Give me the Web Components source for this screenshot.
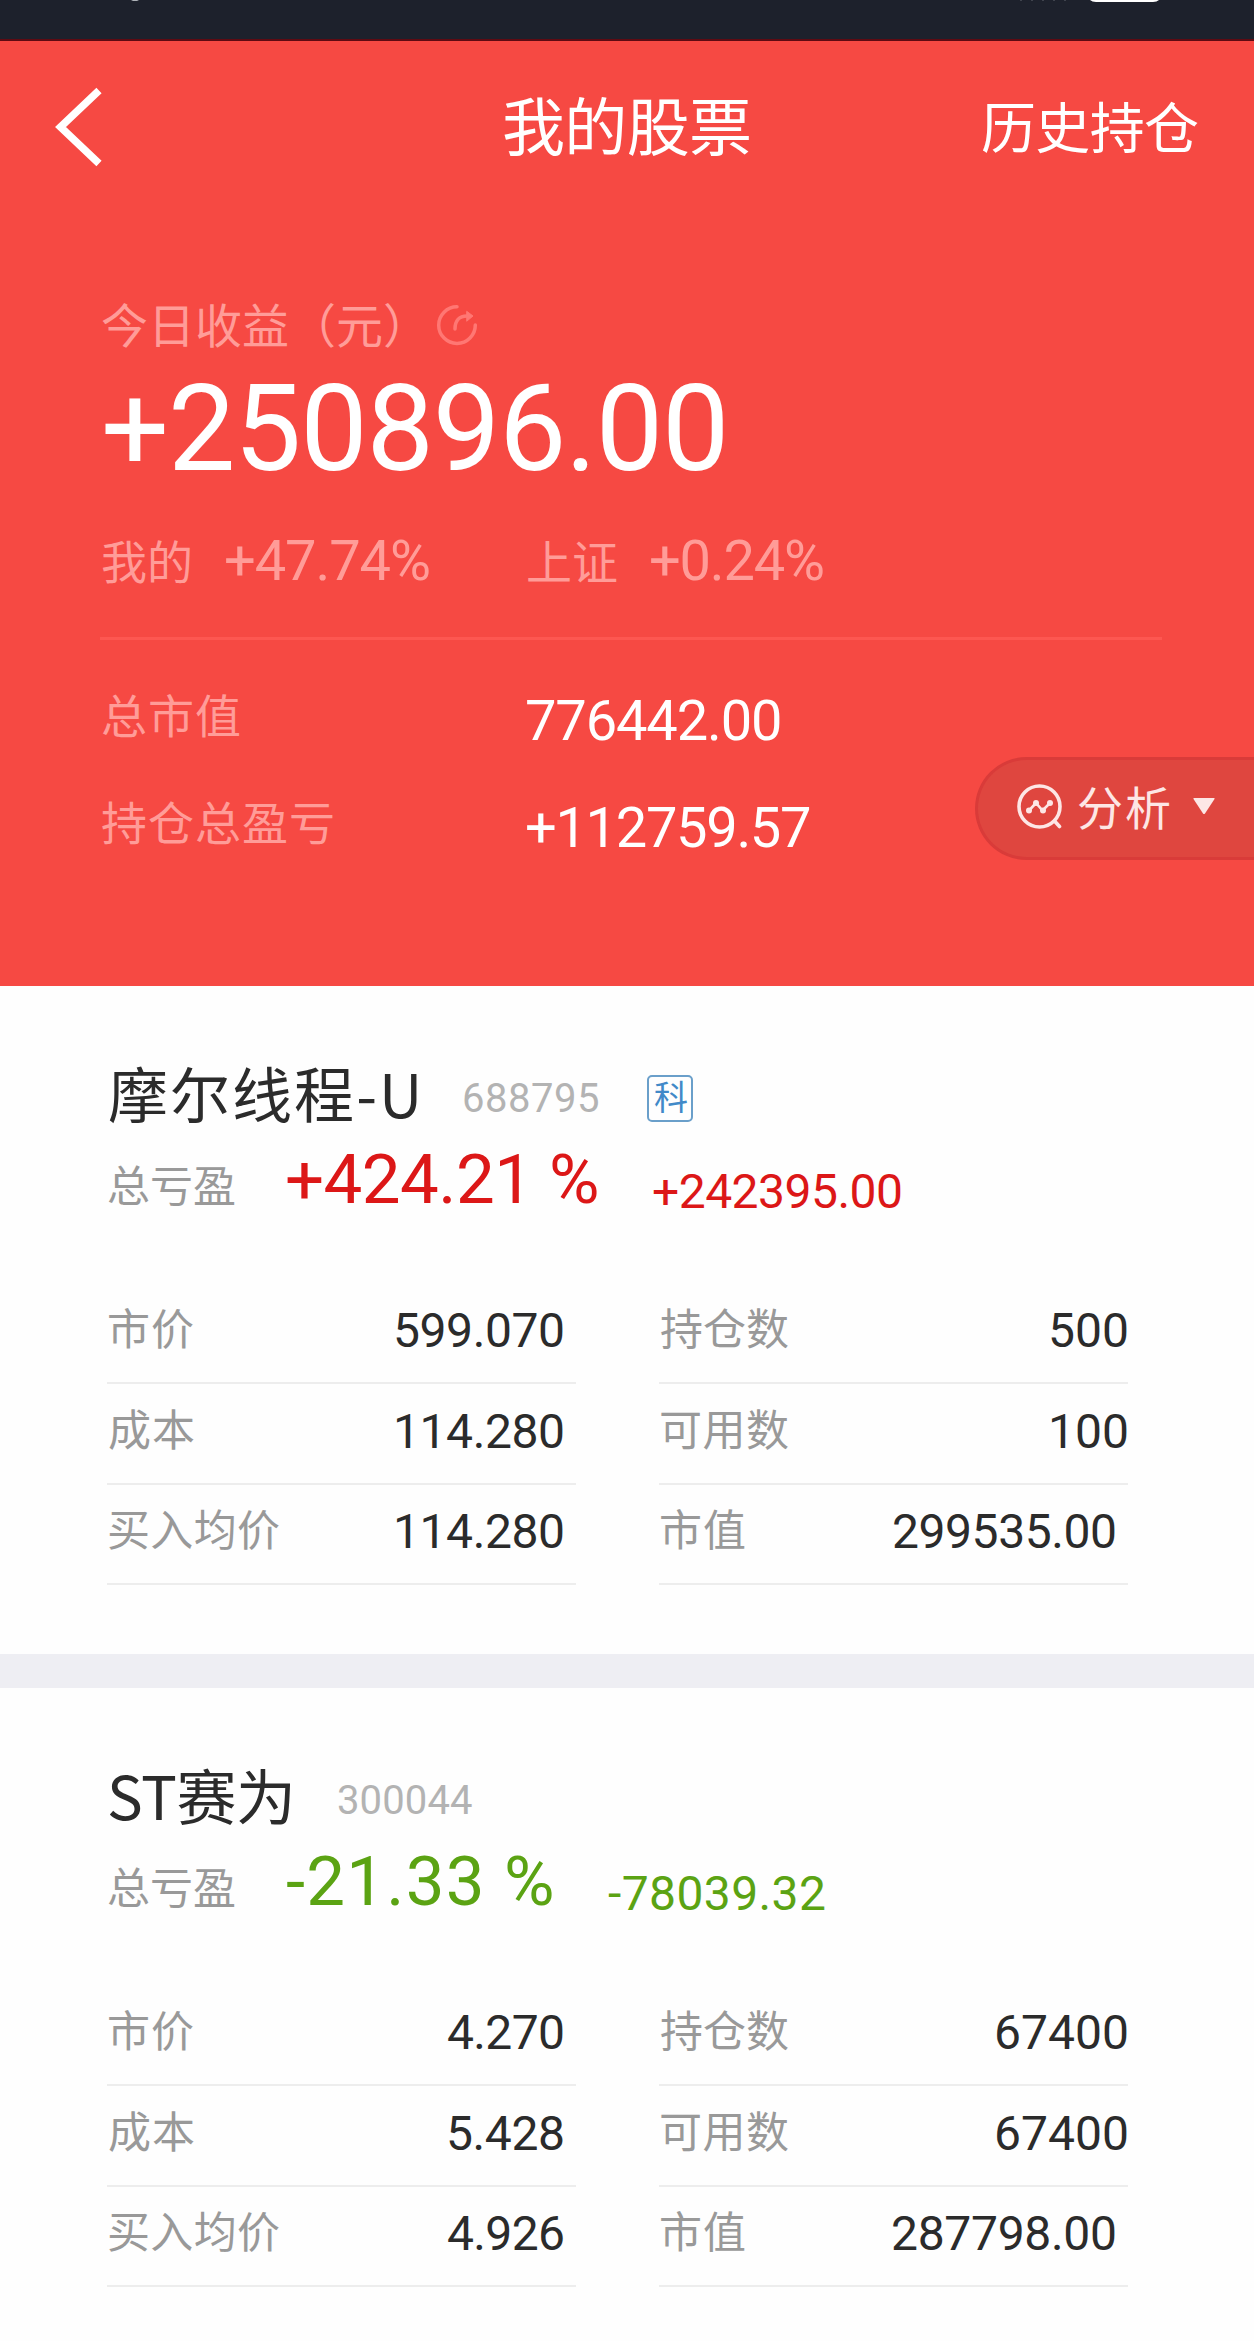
<!DOCTYPE html>
<html lang="zh-CN">
<head>
<meta charset="utf-8">
<title>我的股票</title>
<style>
    html, body{margin: 0;padding: 0;background: #fefefe;}
    body{width: 1254px;height: 2341px;overflow: hidden;font-family: Roboto, "Noto Sans CJK SC", sans-serif;}
</style>
</head>
<body>

<status-bar></status-bar>
<profit-header></profit-header>
<stock-list></stock-list>

<script>
const FACES = {
    num: 'Roboto, "Noto Sans CJK SC", sans-serif',
    cjk: '"Noto Sans CJK SC", sans-serif'
};
const pen = document.createElement('canvas').getContext('2d');

// one line of text: size = font size, ink = drawn width, base = baseline from the row top
class InkText extends HTMLElement {

    constructor() {
        super();
        this.attachShadow({ mode: 'open' });
        this.shadowRoot.innerHTML = `
            <style>
                :host{display: block;flex: none;}
                span{display: block;line-height: 1;white-space: pre;}
            </style>
            <span><slot></slot></span>
        `;
    }

    connectedCallback() {
        const size = Number(this.getAttribute('size'));
        const ink = Number(this.getAttribute('ink'));
        const base = Number(this.getAttribute('base'));
        const face = FACES[this.getAttribute('face') || 'num'];
        const text = this.textContent;
        const span = this.shadowRoot.querySelector('span');

        pen.font = size + 'px ' + face;
        const m = pen.measureText(text);
        const real = m.actualBoundingBoxLeft + m.actualBoundingBoxRight;
        const space = text.length > 1 ? (ink - real) / (text.length - 1) : 0;
        const up = m.fontBoundingBoxAscent;
        const down = m.fontBoundingBoxDescent;

        span.style.font = size + 'px/1 ' + face;
        span.style.letterSpacing = space.toFixed(3) + 'px';
        span.style.marginLeft = m.actualBoundingBoxLeft + 'px';
        this.style.width = ink + 'px';
        this.style.height = size + 'px';
        this.style.marginTop = Math.round(base - (size - up - down) / 2 - up) + 'px';
    }
}

class StatusBar extends HTMLElement {

    constructor() {
        super();
        this.attachShadow({ mode: 'open' });
        this.shadowRoot.innerHTML = `
            <style>
                :host{display: flex;box-sizing: border-box;height: 41px;background: #1d212c;border-bottom: 2px solid #5e0a12;}
                svg{display: block;}
            </style>
            <svg width="1254" height="6" viewBox="0 0 1254 6">
                <path d="M131 0h8l-2 1h-4z" fill="#aeb2b8"/>
                <path d="M1020 .5h50" stroke="#3f434d" stroke-dasharray="2 9"/>
                <path d="M1090 0h69q-2 2-6 2h-57q-4 0-6-2z" fill="#fff"/>
            </svg>
        `;
    }
}

class NavBar extends HTMLElement {

    constructor() {
        super();
        this.attachShadow({ mode: 'open' });
        this.shadowRoot.innerHTML = `
            <style>
                :host{display: grid;grid-template-columns: 504px 478px 272px;height: 240px;color: #fff;}
                svg{display: block;margin: 43px 0 0 50px;}
            </style>
            <svg width="60" height="86" viewBox="0 0 60 86" fill="none" stroke="#fff" stroke-width="7.5">
                <path d="M49 6.500L10.500 43L49 79.500"/>
            </svg>
            <ink-text face="cjk" size="63" ink="245" base="109">我的股票</ink-text>
            <ink-text face="cjk" size="55" ink="216" base="107">历史持仓</ink-text>
        `;
    }
}

class AnalysisButton extends HTMLElement {

    constructor() {
        super();
        this.attachShadow({ mode: 'open' });
        this.shadowRoot.innerHTML = `
            <style>
                :host{display: flex;box-sizing: border-box;width: 279px;height: 103px;padding: 0 0 0 38px;
                    background: #df463f;border: 3px solid #d93b39;border-right: 0;border-radius: 52px 0 0 52px;color: #fde6e5;}
                .icon{display: block;flex: none;margin: 22px 17px 0 0;}
                .arrow{display: block;flex: none;margin: 38px 0 0 24px;}
            </style>
            <svg class="icon" width="46" height="50" viewBox="0 0 46 50" fill="none" stroke="#fde6e5" stroke-width="3.600" stroke-linecap="round" stroke-linejoin="round">
                <circle cx="23.500" cy="24.500" r="20.500"/>
                <path d="M38.500 39l5 5.500"/>
                <path d="M13 28.500L20 21l6.500 7.500L34 21" stroke-width="2.600"/>
                <g fill="#fde6e5" stroke="none">
                    <circle cx="13" cy="28.500" r="3"/><circle cx="20" cy="21" r="3"/>
                    <circle cx="27" cy="28.500" r="3"/><circle cx="34" cy="21" r="3"/>
                </g>
            </svg>
            <ink-text face="cjk" size="46" ink="90" base="65">分析</ink-text>
            <svg class="arrow" width="22" height="17" viewBox="0 0 22 17"><path d="M1 0h20q1 0 .5 1L12 15.500q-1 1-2 0L.5 1Q0 0 1 0z" fill="#fde6e5"/></svg>
        `;
    }
}

class ProfitHeader extends HTMLElement {

    constructor() {
        super();
        this.attachShadow({ mode: 'open' });
        this.shadowRoot.innerHTML = `
            <style>
                :host{display: block;position: relative;height: 945px;background: #f64943;color: #fff;}
                .row{display: flex;align-items: flex-start;padding-left: 102px;}
                .soft{color: #ff9c98;}
                .today{height: 99px;}
                .today svg{display: block;margin: 22px 0 0 38px;}
                .total{height: 130px;padding-left: 105px;}
                .rate{height: 127px;}
                .line{height: 3px;margin: 0 92px 0 100px;background: #fd5751;}
                .sum{height: 107px;}
                analysis-button{position: absolute;right: 0;top: 716px;}
            </style>
            <nav-bar></nav-bar>
            <div class="row today">
                <ink-text class="soft" face="cjk" size="47" ink="296" base="62">今日收益（元）</ink-text>
                <svg width="42" height="44" viewBox="0 0 42 44" fill="none" stroke="#ff7773" stroke-width="3.500" stroke-linecap="round">
                    <path d="M21 3.800A18.300 18.300 0 1 0 39.300 22"/>
                    <path d="M19 26c0-8 4-13 12-13"/>
                    <path d="M31 8.500l6 4.500l-6 5z" fill="#ff7773" stroke-width="1"/>
                </svg>
            </div>
            <div class="row total">
                <ink-text size="120" ink="618" base="90">+250896.00</ink-text>
            </div>
            <div class="row rate soft">
                <ink-text face="cjk" size="46" ink="88" base="69">我的</ink-text>
                <ink-text style="margin-left:36px" size="56" ink="203" base="70">+47.74%</ink-text>
                <ink-text style="margin-left:99px" face="cjk" size="46" ink="89" base="69">上证</ink-text>
                <ink-text style="margin-left:34px" size="56" ink="172" base="70">+0.24%</ink-text>
            </div>
            <div class="line"></div>
            <div class="row sum">
                <ink-text class="soft" face="cjk" size="46" ink="138" base="93">总市值</ink-text>
                <ink-text style="margin-left:287px" size="56" ink="253" base="100">776442.00</ink-text>
            </div>
            <div class="row sum">
                <ink-text class="soft" face="cjk" size="46" ink="231" base="93">持仓总盈亏</ink-text>
                <ink-text style="margin-left:194px" size="56" ink="283" base="100">+112759.57</ink-text>
            </div>
            <analysis-button></analysis-button>
        `;
    }
}

class StockField extends HTMLElement {

    constructor() {
        super();
        this.attachShadow({ mode: 'open' });
    }

    connectedCallback() {
        const a = name => this.getAttribute(name);
        this.shadowRoot.innerHTML = `
            <style>
                :host{display: flex;justify-content: space-between;align-items: flex-start;box-sizing: border-box;
                    padding: 0 ${a('end')}px 0 2px;border-bottom: 2px solid #ededed;}
                .label{color: #999;}
                .value{color: #2b2b2b;}
            </style>
            <ink-text class="label" face="cjk" size="43" ink="${a('label-ink')}" base="62">${a('label')}</ink-text>
            <ink-text class="value" size="48" ink="${a('value-ink')}" base="64">${a('value')}</ink-text>
        `;
    }
}

class StockCard extends HTMLElement {

    constructor() {
        super();
        this.attachShadow({ mode: 'open' });
    }

    render(s) {
        this.shadowRoot.innerHTML = `
            <style>
                :host{display: block;height: 668px;}
                .row{display: flex;align-items: flex-start;padding-left: 109px;}
                .name{height: 158px;color: #2b2b2b;}
                .code{margin-left: 47px;color: #b3b3b3;}
                .tag{box-sizing: border-box;width: 46px;height: 47px;margin: 89px 0 0 49px;padding-left: 5px;
                    border: 2px solid #6a9fca;border-radius: 5px;color: #4189c8;}
                .gain{height: 126px;padding-left: 108px;color: ${s.color};}
                .caption{color: #999;}
                .grid{display: grid;grid-template-columns: 469px 469px;grid-template-rows: 114px 101px 100px;column-gap: 83px;padding-left: 107px;}
                stock-field{align-self: end;height: 101px;}
            </style>
            <div class="row name">
                <ink-text face="cjk" size="60" ink="${s.nameInk}" base="132">${s.name}</ink-text>
                <ink-text class="code" size="40" ink="134" base="126">${s.code}</ink-text>
                ${s.tag ? `<div class="tag"><ink-text face="cjk" size="34" ink="32" base="33">${s.tag}</ink-text></div>` : ''}
            </div>
            <div class="row gain">
                <ink-text class="caption" face="cjk" size="43" ink="127" base="58">总亏盈</ink-text>
                <ink-text style="margin-left:52px" size="69" ink="${s.rateInk}" base="59">${s.rate}</ink-text>
                <ink-text style="margin-left:56px" size="48" ink="${s.gainInk}" base="64">${s.gain}</ink-text>
            </div>
            <div class="grid">
                ${s.fields.map(f => `<stock-field label="${f[0]}" label-ink="${f[1]}" value="${f[2]}" value-ink="${f[3]}" end="${f[4]}"></stock-field>`).join('')}
            </div>
        `;
    }
}

const stocks = [
    {
        name: '摩尔线程-U', nameInk: 308, code: '688795', tag: '科', color: '#dc1717',
        rate: '+424.21 %', rateInk: 310, gain: '+242395.00', gainInk: 248,
        fields: [
            ['市价', 84, '599.070', 167, 13], ['持仓数', 127, '500', 76, 1],
            ['成本', 85, '114.280', 166, 13], ['可用数', 127, '100', 75, 1],
            ['买入均价', 170, '114.280', 166, 13], ['市值', 84, '299535.00', 221, 13]
        ]
    },
    {
        name: 'ST赛为', nameInk: 182, code: '300044', color: '#5ba313',
        rate: '-21.33 %', rateInk: 265, gain: '-78039.32', gainInk: 217,
        fields: [
            ['市价', 84, '4.270', 115, 13], ['持仓数', 127, '67400', 130, 1],
            ['成本', 85, '5.428', 114, 13], ['可用数', 127, '67400', 130, 1],
            ['买入均价', 170, '4.926', 115, 13], ['市值', 84, '287798.00', 222, 13]
        ]
    }
];

class StockList extends HTMLElement {

    constructor() {
        super();
        this.attachShadow({ mode: 'open' });
        this.shadowRoot.innerHTML = `
            <style>
                :host{display: flex;flex-direction: column;gap: 34px;background: linear-gradient(#eeeef3, #eeeef3) 0 668px / 100% 34px no-repeat;}
            </style>
        `;
    }

    connectedCallback() {
        stocks.forEach(s => {
            const card = document.createElement('stock-card');
            this.shadowRoot.appendChild(card);
            card.render(s);
        });
    }
}

window.customElements.define('ink-text', InkText);
window.customElements.define('status-bar', StatusBar);
window.customElements.define('nav-bar', NavBar);
window.customElements.define('analysis-button', AnalysisButton);
window.customElements.define('profit-header', ProfitHeader);
window.customElements.define('stock-field', StockField);
window.customElements.define('stock-card', StockCard);
window.customElements.define('stock-list', StockList);
</script>
</body>
</html>
